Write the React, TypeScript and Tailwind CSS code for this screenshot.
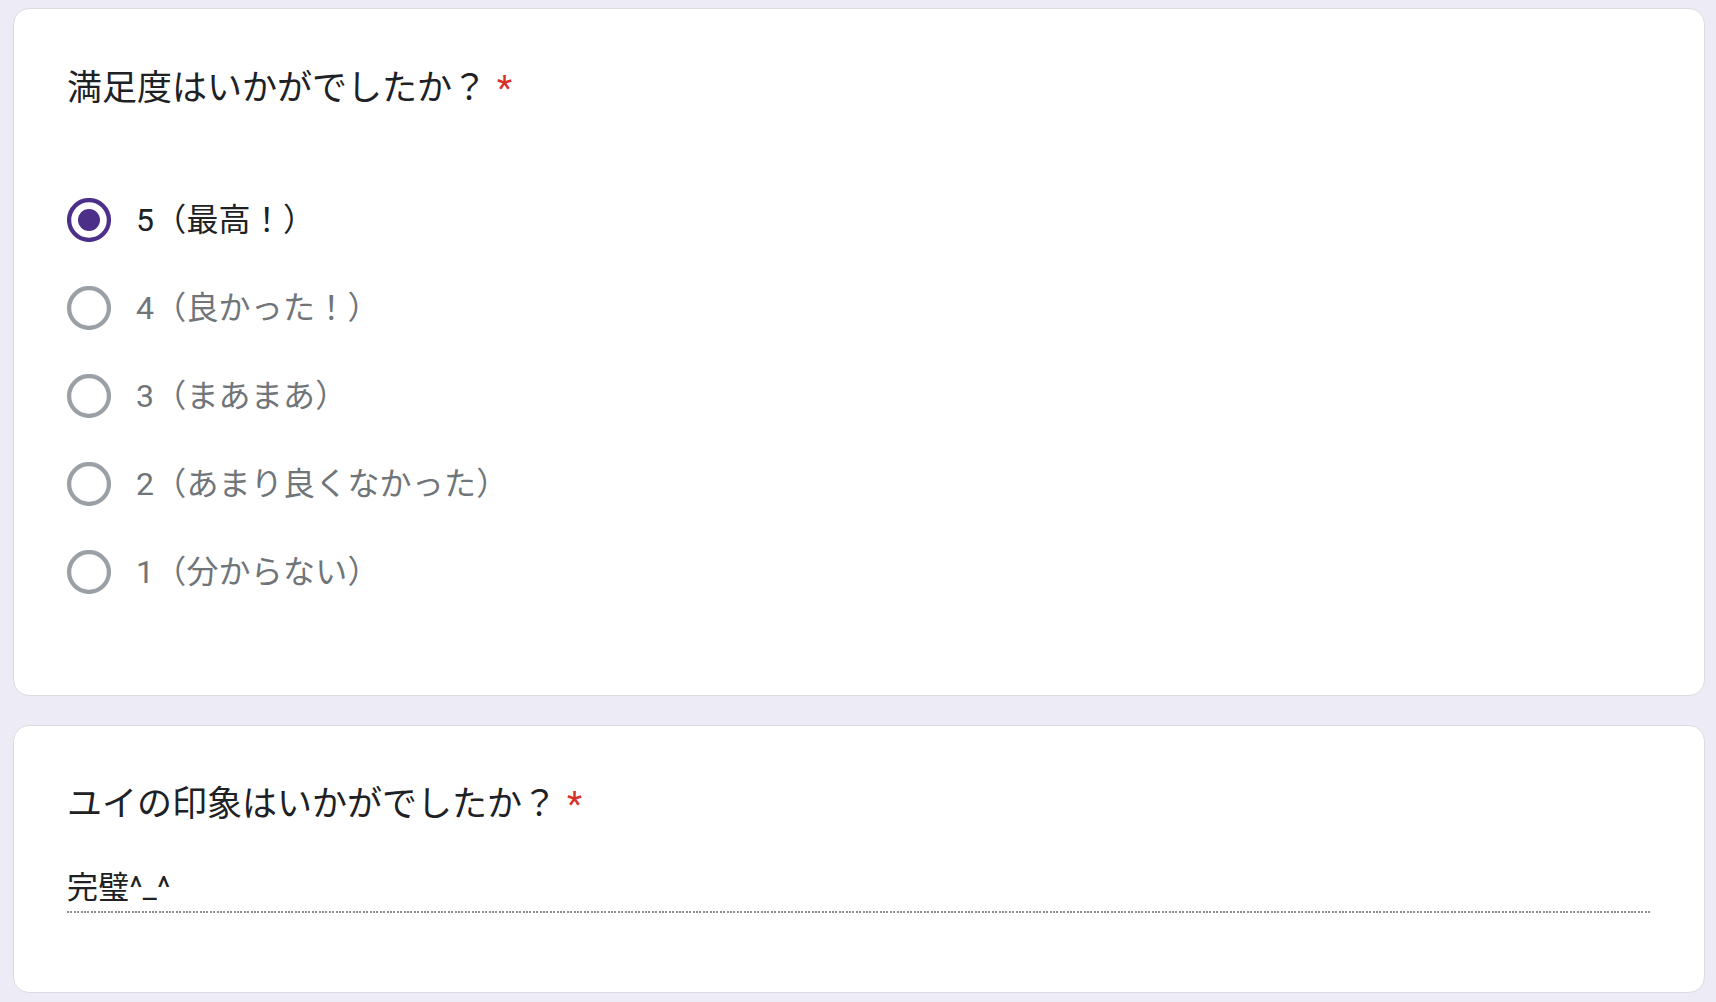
import React from "react";

const FONT = { fontFamily: 'Roboto, "Noto Sans CJK JP", "Noto Sans", sans-serif' };

type Opt = { label: string; selected?: boolean };

const options: Opt[] = [
  { label: "5（最高！）", selected: true },
  { label: "4（良かった！）" },
  { label: "3（まあまあ）" },
  { label: "2（あまり良くなかった）" },
  { label: "1（分からない）" },
];

function Radio({ selected }: { selected?: boolean }) {
  return (
    <svg width="44" height="44" viewBox="0 0 44 44" className="shrink-0">
      <circle
        cx="22"
        cy="22"
        r="19.9"
        fill="none"
        stroke={selected ? "#4b2f88" : "#9aa0a6"}
        strokeWidth="4.3"
      />
      {selected && <circle cx="22" cy="22" r="11" fill="#4b2f88" />}
    </svg>
  );
}

function Title({ text }: { text: string }) {
  return (
    <div className="flex items-start text-[35px] leading-[51px] tracking-[0px] text-[#202124] font-normal">
      <span>{text}</span>
      <span className="ml-[10px] text-[#d93025]">*</span>
    </div>
  );
}

export default function App() {
  return (
    <div
      className="min-h-screen w-full bg-[#edebf6] pt-[8px] pl-[13px] pr-[11px] pb-[9px] flex flex-col gap-[29px]"
      style={FONT}
    >
      <div className="bg-white border border-[#dadce0] rounded-[16px] px-[53px] pt-[54px] pb-[79px]">
        <Title text="満足度はいかがでしたか？" />
        <div className="mt-[62px] flex flex-col">
          {options.map((o) => (
            <div key={o.label} className="h-[88px] flex items-center gap-[25px]">
              <Radio selected={o.selected} />
              <span
                className={
                  "text-[32px] leading-[40px] tracking-[0.2px] " +
                  (o.selected ? "text-[#202124]" : "text-[#70757a]")
                }
              >
                {o.label}
              </span>
            </div>
          ))}
        </div>
      </div>

      <div className="bg-white border border-[#dadce0] rounded-[16px] px-[53px] pt-[53px] pb-[79px]">
        <Title text="ユイの印象はいかがでしたか？" />
        <div className="mt-[37px] text-[31px] leading-[42px] tracking-[0.3px] text-[#202124]">
          完璧^_^
        </div>
        <div className="mt-[2px] h-[2px] w-full bg-[image:repeating-linear-gradient(to_right,#8f8f8f_0px,#8f8f8f_2px,transparent_2px,transparent_3.4px)]" />
      </div>
    </div>
  );
}
